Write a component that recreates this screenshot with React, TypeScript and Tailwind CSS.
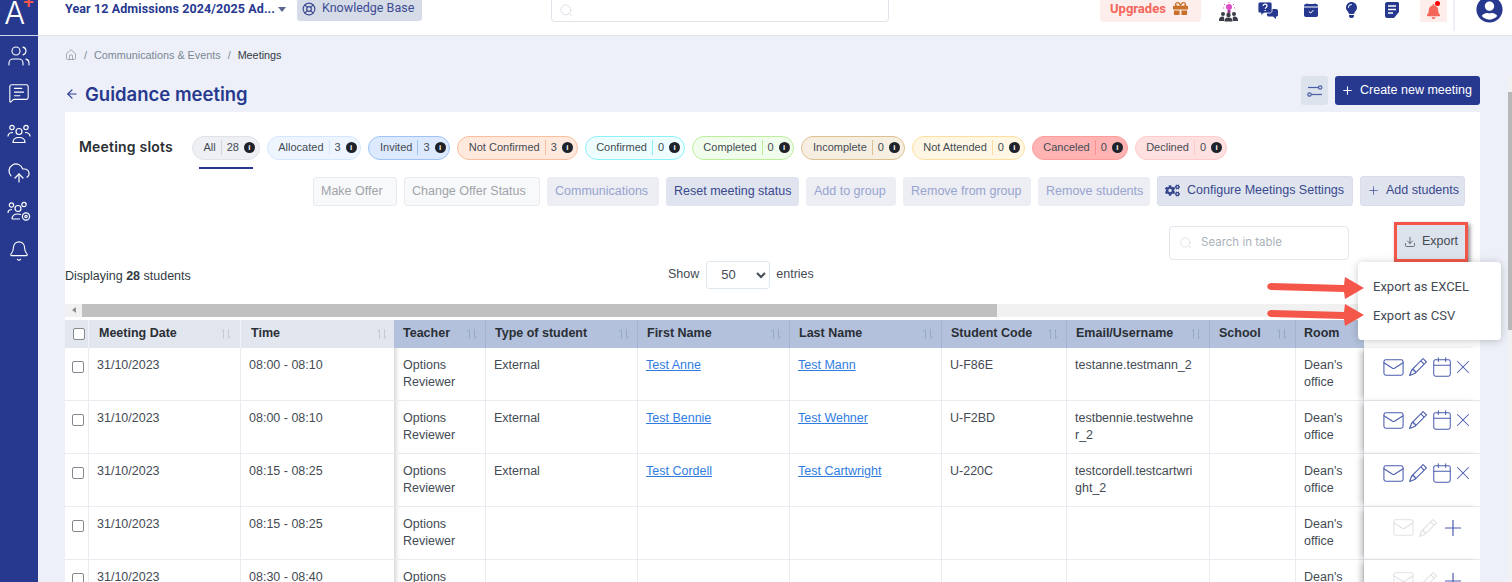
import { ArrowLeft, Bell, Calendar, CloudUpload, Download, Home, LifeBuoy, Mail, MessageSquareText, Plus, Search, Users, X } from 'lucide-react';
import { BsCalendarCheckFill, BsPencil } from 'react-icons/bs';
import { FaBell, FaCogs, FaGift, FaLightbulb, FaUserCircle } from 'react-icons/fa';

const chips = [
  { label: 'All', count: 28, cls: 'bg-[#eef0f4] border-[#dfe2e8]', line: 'bg-[#cfd3da]' },
  { label: 'Allocated', count: 3, cls: 'bg-[#eef5ff] border-[#d5e6ff]', line: 'bg-[#d5e6ff]' },
  { label: 'Invited', count: 3, cls: 'bg-[#dce9ff] border-[#9fc3f5]', line: 'bg-[#9fc3f5]' },
  { label: 'Not Confirmed', count: 3, cls: 'bg-[#ffe9dc] border-[#fbbf9f]', line: 'bg-[#fbbf9f]' },
  { label: 'Confirmed', count: 0, cls: 'bg-[#eefeff] border-[#8bf2fa]', line: 'bg-[#8bf2fa]' },
  { label: 'Completed', count: 0, cls: 'bg-[#f1fdec] border-[#bbef9c]', line: 'bg-[#bbef9c]' },
  { label: 'Incomplete', count: 0, cls: 'bg-[#f6eee0] border-[#dcc190]', line: 'bg-[#dcc190]' },
  { label: 'Not Attended', count: 0, cls: 'bg-[#fff7e3] border-[#fcdf9f]', line: 'bg-[#fcdf9f]' },
  { label: 'Canceled', count: 0, cls: 'bg-[#ffb3b3] border-[#ff9c9c]', line: 'bg-[#f79090]' },
  { label: 'Declined', count: 0, cls: 'bg-[#ffe0e0] border-[#ffcaca]', line: 'bg-[#ffcaca]' },
];

const actions = [
  { label: 'Make Offer', cls: 'w-[84px] bg-[#f8f9fb] border-[#e8eaef] text-[#a0a3a8]' },
  { label: 'Change Offer Status', cls: 'w-[136px] bg-[#f8f9fb] border-[#e8eaef] text-[#a0a3a8]' },
  { label: 'Communications', cls: 'w-[112px] bg-[#eceef4] border-[#eceef4] text-[#98a3cf]' },
  { label: 'Reset meeting status', cls: 'w-[133px] bg-[#e0e4ee] border-[#e0e4ee] text-[#39498f]' },
  { label: 'Add to group', cls: 'w-[90px] bg-[#eceef4] border-[#eceef4] text-[#98a3cf]' },
  { label: 'Remove from group', cls: 'w-[128px] bg-[#eceef4] border-[#eceef4] text-[#98a3cf]' },
  { label: 'Remove students', cls: 'w-[112px] bg-[#eceef4] border-[#eceef4] text-[#98a3cf]' },
];

const columns = [
  { label: 'Teacher', w: 'w-[92px]' },
  { label: 'Type of student', w: 'w-[152px]' },
  { label: 'First Name', w: 'w-[152px]' },
  { label: 'Last Name', w: 'w-[152px]' },
  { label: 'Student Code', w: 'w-[125px]' },
  { label: 'Email/Username', w: 'w-[143px]' },
  { label: 'School', w: 'w-[86px]' },
];

const rows = [
  { time: '08:00 - 08:10', type: 'External', first: 'Test Anne', last: 'Test Mann', code: 'U-F86E', email: 'testanne.testmann_2' },
  { time: '08:00 - 08:10', type: 'External', first: 'Test Bennie', last: 'Test Wehner', code: 'U-F2BD', email: 'testbennie.testwehner_2' },
  { time: '08:15 - 08:25', type: 'External', first: 'Test Cordell', last: 'Test Cartwright', code: 'U-220C', email: 'testcordell.testcartwright_2' },
  { time: '08:15 - 08:25' },
  { time: '08:30 - 08:40' },
] as Array<{ time: string; type?: string; first?: string; last?: string; code?: string; email?: string }>;

const InfoDot = () => (
  <span className="flex h-[11px] w-[11px] items-center justify-center rounded-full bg-[#1f2329] text-[8px] font-bold leading-none text-white">i</span>
);

const SortArrows = ({ className }: { className: string }) => (
  <svg width="12" height="12" viewBox="0 0 12 12" fill="none" stroke="currentColor" strokeWidth="1" className={`shrink-0 ${className}`}>
    <path d="M3.5 11V1.5M3.5 1.5L1.5 3.5M8.5 1V10.5M8.5 10.5L10.5 8.5" />
  </svg>
);

const Slider = () => (
  <svg width="16" height="14" viewBox="0 0 16 14" fill="none" stroke="#4c5fa8" strokeWidth="1.2">
    <path d="M1 3.5H11.5" />
    <circle cx="13.2" cy="3.5" r="1.7" />
    <circle cx="2.5" cy="10.5" r="1.7" />
    <path d="M4.2 10.5H15" />
  </svg>
);

const Idea = () => (
  <svg width="19" height="20" viewBox="0 0 19 20">
    <circle cx="10" cy="5" r="3" fill="#d84fc4" />
    <rect x="8.5" y="8" width="3" height="3" fill="#a13c96" />
    <path d="M10 0V1M5 2L6 3M15 2L14 3M4 6H5M15 6H16" stroke="#d84fc4" strokeWidth="1" />
    <circle cx="4" cy="12" r="2" fill="#3b3d48" />
    <circle cx="15" cy="12" r="2" fill="#3b3d48" />
    <circle cx="9.5" cy="13" r="2.2" fill="#3b3d48" />
    <path d="M0 19C0 15 2 14.5 4 14.5C6 14.5 5 19 5 19ZM19 19C19 15 17 14.5 15 14.5C13 14.5 14 19 14 19ZM5.5 19.5C5.5 16 7.5 15.5 9.5 15.5C11.5 15.5 13.5 16 13.5 19.5Z" fill="#3b3d48" />
  </svg>
);

const Bubbles = () => (
  <svg width="20" height="17" viewBox="0 0 20 17">
    <path d="M9 7H18C19 7 20 7.8 20 9V13C20 14 19 14.5 18 14.5V17L15 14.5H11C10 14.5 9 14 9 13Z" fill="#27398f" />
    <path d="M2 0H12C13 0 14 1 14 2V9C14 10 13 11 12 11H6L3 13.5V11H2C1 11 0 10 0 9V2C0 1 1 0 2 0Z" fill="#27398f" stroke="white" strokeWidth="0.8" />
    <path d="M5.2 4C5.2 1.6 9 1.6 9 4C9 5.4 7.2 5.4 7.2 6.8M7.2 8V9" fill="none" stroke="white" strokeWidth="1.3" />
  </svg>
);

const Note = () => (
  <svg width="14" height="16" viewBox="0 0 14 16">
    <path d="M2 0H12.5C13.3 0 14 .7 14 1.5V10L9 16H2C1 16 0 15 0 14V2C0 1 1 0 2 0Z" fill="#27398f" />
    <path d="M3 4H11M3 7.5H11M3 11H8" stroke="white" strokeWidth="1.4" />
  </svg>
);

const UsersGear = () => (
  <svg width="24" height="22" viewBox="0 0 24 22" fill="none" stroke="white" strokeWidth="1.2">
    <circle cx="4.5" cy="4" r="2.2" />
    <circle cx="17" cy="3.5" r="2.2" />
    <circle cx="11" cy="7.5" r="3" />
    <path d="M1 12C1 9 3 8.5 5 8.5M5 18C5 14 8 13 11 13C12 13 13 13.2 14 13.5M5 18H13" />
    <circle cx="19" cy="15.5" r="3.6" />
    <circle cx="19" cy="15.5" r="1.2" />
  </svg>
);

const Group = () => (
  <svg width="24" height="20" viewBox="0 0 24 20" fill="none" stroke="white" strokeWidth="1.2">
    <circle cx="5" cy="3.5" r="2.2" />
    <circle cx="19" cy="3.5" r="2.2" />
    <circle cx="12" cy="7.5" r="3" />
    <path d="M1 12.5C1 9.5 3 8.5 6 8.5M23 12.5C23 9.5 21 8.5 18 8.5M6 18.5C6 15 8 13.5 12 13.5C16 13.5 18 15 18 18.5Z" />
  </svg>
);

const Arrow = () => (
  <svg width="97" height="22" viewBox="0 0 97 22">
    <path d="M4 6L77 8L78 0L97 11L78 22L77 15L4 13C-1 12.5 -1 6.5 4 6Z" fill="#f4574a" />
  </svg>
);

const Check = () => (
  <input type="checkbox" className="block h-[12px] w-[12px] appearance-none rounded-[2px] border border-[#85898f] bg-white" />
);

const sideIcons = [
  <Users size={24} strokeWidth={1.1} />,
  <MessageSquareText size={22} strokeWidth={1.2} className="-mt-[3px]" />,
  <Group />,
  <CloudUpload size={24} strokeWidth={1.2} />,
  <UsersGear />,
  <Bell size={22} strokeWidth={1.2} />,
];

export default function App() {
  return (
    <div className="relative flex h-screen overflow-hidden bg-[#edf0f8] font-['Liberation_Sans',Arial,sans-serif] text-[13px] text-[#444b54]">
      <aside className="flex w-[38px] shrink-0 flex-col items-center bg-[#27398f] text-white">
        <div className="flex h-[36px] w-full shrink-0 items-start justify-center overflow-hidden border-b border-white/80">
          <span className="-mt-[6px] font-['Inter',sans-serif] text-[31px] font-light leading-[38px]">A</span>
          <span className="-ml-[2px] -mt-[7px] text-[18px] font-bold leading-none text-[#f4574a]">+</span>
        </div>
        {sideIcons.map((icon, i) => (
          <div key={i} className="flex h-[39px] items-center">{icon}</div>
        ))}
      </aside>

      <div className="flex min-w-0 flex-1 flex-col">
        <header className="flex h-[36px] shrink-0 items-start border-b border-[#e2e4e8] bg-white pl-[27px]">
          <div className="flex w-[225px] items-center font-['Roboto',sans-serif] text-[12.5px] font-bold tracking-[0.1px] text-[#27398f]">
            <span className="whitespace-nowrap">Year 12 Admissions 2024/2025 Ad...</span>
            <span className="ml-[3px] h-0 w-0 border-x-4 border-t-[5px] border-x-transparent border-t-[#5a6690]" />
          </div>
          <div className="-mt-[4px] ml-[7px] flex h-[25px] w-[125px] items-center gap-[6px] rounded-[3px] bg-[#d6dbe8] px-[5px] font-['Roboto',sans-serif] text-[12.5px] text-[#3c4c94]">
            <LifeBuoy size={14} strokeWidth={2} />
            Knowledge Base
          </div>
          <div className="-mt-[10px] ml-[129px] flex h-[32px] w-[338px] items-center rounded border border-[#dfe3ea] bg-white px-[7px]">
            <Search size={15} strokeWidth={1.2} className="mt-[8px] text-[#cfd6de]" />
          </div>
          <div className="-mt-[5px] ml-[211px] flex h-[27px] w-[101px] items-center gap-[7px] rounded-[4px] bg-[#fdeeec] px-[10px] font-['Roboto',sans-serif] text-[13px] font-bold text-[#f4655a]">
            Upgrades
            <FaGift size={15} className="text-[#c9702b]" />
          </div>
          <div className="ml-[17px] flex h-[23px] w-[20px] items-center justify-center"><Idea /></div>
          <div className="ml-[20px] flex h-[20px] w-[20px] items-center"><Bubbles /></div>
          <div className="ml-[26px] flex h-[20px] w-[14px] items-center text-[#27398f]"><BsCalendarCheckFill size={14} /></div>
          <div className="ml-[27px] flex h-[20px] w-[13px] items-center justify-center text-[#27398f]"><FaLightbulb size={16} /></div>
          <div className="ml-[27px] flex h-[20px] w-[14px] items-center"><Note /></div>
          <div className="relative ml-[21px] flex h-[22px] w-[27px] items-center justify-center bg-[#fdeeec] text-[#f4655a]">
            <FaBell size={15} />
            <span className="absolute right-[7px] top-[1px] h-[5px] w-[5px] rounded-full bg-[#f00]" />
          </div>
          <div className="ml-[6px] h-[31px] w-[2px] bg-[#eef1f6]" />
          <div className="ml-[21px] text-[#27398f]"><FaUserCircle size={27} className="-mt-[4px]" /></div>
        </header>

        <main className="flex min-h-0 flex-1 flex-col pl-[27px] pr-[32px]">
          <nav className="flex h-[38px] shrink-0 items-center gap-[7px] text-[10.8px] text-[#7a8793]">
            <Home size={12} strokeWidth={1.3} />
            <span>/</span>
            <span>Communications &amp; Events</span>
            <span>/</span>
            <span className="text-[#333a42]">Meetings</span>
          </nav>

          <div className="flex h-[38px] shrink-0 items-start justify-between pt-[2px]">
            <h1 className="mt-[5px] flex items-center gap-[6px] font-['Inter',sans-serif] text-[18.5px] font-semibold leading-[26px] text-[#27398f]">
              <ArrowLeft size={14} strokeWidth={2} />
              Guidance meeting
            </h1>
            <div className="flex gap-[7px]">
              <div className="flex h-[29px] w-[27px] items-center justify-center rounded-[3px] bg-[#dce3ec]"><Slider /></div>
              <button className="flex h-[29px] w-[145px] items-center gap-[6px] rounded-[3px] bg-[#27398f] px-[6px] text-[12.5px] whitespace-nowrap text-white">
                <Plus size={13} strokeWidth={2} className="shrink-0" />
                Create new meeting
              </button>
            </div>
          </div>

          <section className="relative min-h-0 flex-1 bg-white">
            <div className="flex h-[49px] items-center pl-[14px] pt-[22px]">
              <h2 className="-mt-[2px] w-[113px] font-['Inter',sans-serif] text-[14px] font-semibold leading-none tracking-[0.2px] text-[#2a2f35]">Meeting slots</h2>
              <div className="flex gap-[7px]">
                {chips.map((chip) => (
                  <span key={chip.label} className={`flex h-[24px] items-center gap-[5px] rounded-full border pl-[10.5px] pr-[3.8px] text-[11px] text-[#444b54] ${chip.cls}`}>
                    {chip.label}
                    <span className={`h-[15px] w-px ${chip.line}`} />
                    {chip.count}
                    <InfoDot />
                  </span>
                ))}
              </div>
            </div>
            <div className="ml-[134px] mt-[6px] h-[1.5px] w-[54px] bg-[#27398f]" />

            <div className="mt-[8px] flex justify-end gap-[7px] pr-[15px]">
              {actions.map((a) => (
                <button key={a.label} className={`flex h-[29px] items-center justify-start rounded-[3px] border pl-[7px] text-[12.5px] ${a.cls}`}>{a.label}</button>
              ))}
              <button className="-mt-[1px] flex h-[30px] w-[196px] items-center gap-[7px] rounded-[3px] border border-[#d9deea] bg-[#e0e4ee] pl-[6px] text-[12.5px] text-[#39498f]">
                <FaCogs size={15} className="ml-[1px]" />
                Configure Meetings Settings
              </button>
              <button className="-mt-[1px] flex h-[30px] w-[105px] items-center gap-[6px] rounded-[3px] border border-[#d9deea] bg-[#e0e4ee] pl-[6px] text-[12.5px] text-[#39498f]">
                <Plus size={13} strokeWidth={1.3} />
                Add students
              </button>
            </div>

            <div className="mt-[19px] flex h-[36px] items-start justify-end pr-[15px]">
              <div className="mt-[1px] flex h-[34px] w-[180px] items-center gap-[8px] rounded-[4px] border border-[#e2e7ee] px-[9px] font-['Inter',sans-serif] text-[11.5px] text-[#aab2ba]">
                <Search size={14} strokeWidth={1.2} className="text-[#d3dae0]" />
                Search in table
              </div>
              <button className="ml-[48px] flex h-[34px] w-[68px] items-center justify-center gap-[6px] bg-[#dce3ec] text-[12.5px] text-[#444b54] outline-[3px] outline-[#f4574a] shadow-[2px_2px_4px_3px_rgba(0,0,0,0.45)]">
                <Download size={12} strokeWidth={1.5} />
                Export
              </button>
            </div>

            <div className="relative h-[43px]">
              <div className="absolute left-0 top-[6px] text-[12.5px] text-[#333a42]">Displaying <b>28</b> students</div>
              <div className="absolute left-[603px] top-0 flex items-center gap-[6px] text-[12.5px]">
                Show
                <select defaultValue="50" className="ml-[1px] h-[28px] w-[64px] rounded-[3px] border border-[#dfe7ef] bg-white px-[10px] text-[13px]">
                  <option value="50">50</option>
                </select>
                <span>entries</span>
              </div>
            </div>

            <div className="flex h-[13px] bg-[#f1f1f1]">
              <div className="flex w-[17px] items-center justify-center">
                <span className="h-0 w-0 border-y-[3.5px] border-r-[4px] border-y-transparent border-r-[#8f8f8f]" />
              </div>
              <div className="h-full w-[915px] bg-[#c0c0c0]" />
            </div>

            <div className="mt-[3px] overflow-hidden">
              <table className="w-[1415px] table-fixed border-separate border-spacing-0 text-left text-[12.5px] leading-[17.5px]">
                <thead>
                  <tr className="h-[28px] text-[12.5px] font-bold text-[#2a2f35]">
                    <th className="w-[24px] border-r border-[#f1f3f7] bg-[#e2e6ef] pl-[8px]"><Check /></th>
                    <th className="w-[152px] border-r border-[#f1f3f7] bg-[#e2e6ef] pl-[10px] pr-[8px] pt-[1px]">
                      <div className="flex items-center justify-between">Meeting Date <SortArrows className="text-[#c5cad3]" /></div>
                    </th>
                    <th className="w-[153px] bg-[#e2e6ef] pl-[10px] pr-[6px] pt-[1px]">
                      <div className="flex items-center justify-between">Time <SortArrows className="text-[#c5cad3]" /></div>
                    </th>
                    {columns.map((c) => (
                      <th key={c.label} className={`${c.w} border-r border-[#a5b3d1] bg-[#b3c1dc] pl-[9px] pr-[7px] pt-[1px]`}>
                        <div className="flex items-center justify-between">{c.label} <SortArrows className="text-[#97a9c9]" /></div>
                      </th>
                    ))}
                    <th className="bg-[#b3c1dc] px-[8px] pt-[1px]">Room</th>
                    <th className="w-[116px] bg-white" />
                  </tr>
                </thead>
                <tbody>
                  {rows.map((r, i) => {
                    const cell = 'border-b border-r border-[#e8ebf0] px-[8px] pt-[9px] align-top h-[53px]';
                    return (
                      <tr key={i}>
                        <td className="border-b border-r border-[#e8ebf0] pl-[7px] pt-[13px] align-top"><Check /></td>
                        <td className={cell}>31/10/2023</td>
                        <td className={`${cell} border-r-0`}>{r.time}</td>
                        <td className={`${cell} pl-[9px] shadow-[inset_6px_0_5px_-4px_rgba(0,0,0,0.18)]`}>Options Reviewer</td>
                        <td className={cell}>{r.type}</td>
                        <td className={cell}><a className="text-[#2f7de1] underline">{r.first}</a></td>
                        <td className={cell}><a className="text-[#2f7de1] underline">{r.last}</a></td>
                        <td className={cell}>{r.code}</td>
                        <td className={`${cell} break-all pr-[14px]`}>{r.email}</td>
                        <td className={cell}></td>
                        <td className={cell}>Dean's office</td>
                        <td className="relative border-b border-[#e8ebf0] bg-white pt-[8px] align-top shadow-[-5px_0_6px_-2px_rgba(0,0,0,0.25)]">
                          {r.type ? (
                            <div className="flex items-center pl-[18px] text-[#4a5cae]">
                              <Mail size={23} strokeWidth={1.1} />
                              <BsPencil size={18} className="ml-[4px]" />
                              <Calendar size={22} strokeWidth={1.1} className="ml-[4px]" />
                              <X size={22} strokeWidth={1.1} className="ml-[-1px]" />
                            </div>
                          ) : (
                            <div className="flex items-center pl-[28px] text-[#dfe1e4]">
                              <Mail size={23} strokeWidth={1.1} />
                              <BsPencil size={18} className="ml-[4px]" />
                              <Plus size={26} strokeWidth={1.1} className="ml-[3px] text-[#4a5cae]" />
                            </div>
                          )}
                        </td>
                      </tr>
                    );
                  })}
                </tbody>
              </table>
            </div>

            <div className="absolute left-[1293px] top-[150px] z-10 flex h-[78px] w-[143px] flex-col justify-center gap-[10px] rounded-[4px] bg-white pl-[15px] font-['Roboto',sans-serif] text-[13px] text-[#444b54] shadow-[0_1px_8px_rgba(0,0,0,0.22)]">
              <span>Export as EXCEL</span>
              <span>Export as CSV</span>
            </div>
            <div className="absolute left-[1202px] top-[165px] z-20"><Arrow /></div>
            <div className="absolute left-[1202px] top-[192px] z-20"><Arrow /></div>
          </section>
        </main>
      </div>

      <div className="absolute right-0 top-[76px] flex h-full w-[4px] bg-[#f1f1f1]">
        <div className="mt-[16px] h-[238px] w-full bg-[#b8b8b8]" />
      </div>
    </div>
  );
}
